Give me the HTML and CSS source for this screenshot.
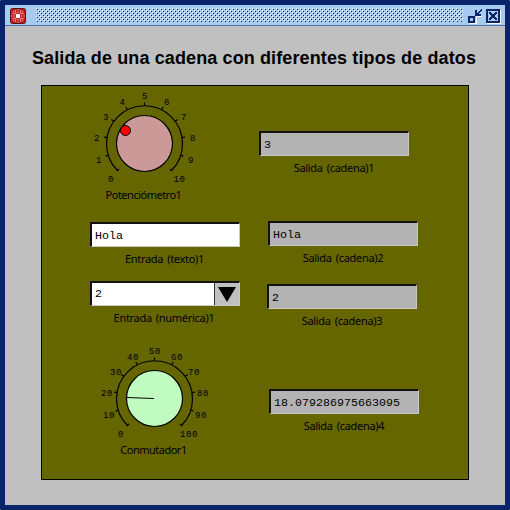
FILE: index.html
```
<!DOCTYPE html>
<html lang="es">
<head>
<meta charset="utf-8">
<title>Salida de una cadena</title>
<link rel="stylesheet" href="styles.css">
</head>
<body>
<div class="window">
  <header class="titlebar">
    <svg class="app-icon" width="16" height="16" viewBox="0 0 16 16">
      <rect x=".5" y=".5" width="15" height="15" rx="2" fill="#c41e24" stroke="#5c1010"/>
      <g stroke="#eaa09c" stroke-width="1" fill="none">
        <path d="M8 1v4M8 11v4M1 8h4M11 8h4M3 3l3 3M13 3l-3 3M3 13l3-3M13 13l-3-3" stroke-dasharray="1.5 1"/>
        <path d="M5 2l1 3M11 2l-1 3M2 5l3 1M2 11l3-1M14 5l-3 1M14 11l-3-1M5 14l1-3M11 14l-1-3" stroke-width=".9"/>
      </g>
      <rect x="6" y="6" width="4" height="4" fill="#fff"/>
    </svg>
    <svg class="grip" width="427" height="14" shape-rendering="crispEdges">
      <defs>
        <pattern id="dots" width="4" height="4" patternUnits="userSpaceOnUse">
          <path d="M0 0h1v1H0zM2 2h1v1H2z" fill="#fff"/>
          <path d="M1 1h1v1H1zM3 3h1v1H3z" fill="#0a246a"/>
        </pattern>
      </defs>
      <rect width="427" height="14" fill="url(#dots)"/>
    </svg>
    <svg class="controls" width="34" height="16" viewBox="0 0 34 16" shape-rendering="crispEdges">
      <g fill="none" stroke="#fff"><path d="M2 15.500h7.500V9M10 8.500h5M20 15.500h13.500V2"/></g>
      <rect x="2" y="9" width="5" height="5" fill="#a6caf0" stroke="#0a246a" stroke-width="2"/>
      <path d="M8 2h2v3h1V4h1V3h1V2h1V1h1v2h-1v1h-1v1h-1v1h2v2H8z" fill="#0a246a"/>
      <rect x="20" y="2" width="12" height="12" fill="#a6caf0" stroke="#0a246a" stroke-width="2"/>
      <path d="M22 4h2v1h1v1h2V5h1V4h2v2h-1v1h-1v2h1v1h1v2h-2v-1h-1v-1h-2v1h-1v1h-2v-2h1V9h1V7h-1V6h-1z" fill="#0a246a"/>
    </svg>
  </header>
  <main class="content">
    <h1>Salida de una cadena con diferentes tipos de datos</h1>
    <div class="panel">
      <section class="inputs">
        <figure class="knob potentiometer">
          <svg width="130" height="101" viewBox="0 0 130 101">
            <path class="scale" d="M37.5 85.5A38 38 0 1 1 91.5 85.5"/>
            <g class="ticks" transform="translate(64.5 58.5)">
              <path d="M0-38v-3"/><path d="M0-38v-3" transform="rotate(27)"/><path d="M0-38v-3" transform="rotate(54)"/><path d="M0-38v-3" transform="rotate(81)"/><path d="M0-38v-3" transform="rotate(108)"/><path d="M0-36v-3" transform="rotate(135)"/><path d="M0-38v-3" transform="rotate(-27)"/><path d="M0-38v-3" transform="rotate(-54)"/><path d="M0-38v-3" transform="rotate(-81)"/><path d="M0-38v-3" transform="rotate(-108)"/><path d="M0-36v-3" transform="rotate(-135)"/>
            </g>
            <circle class="dial pink" cx="64.5" cy="58.5" r="28"/>
            <circle class="marker" cx="45.5" cy="45.5" r="5"/>
            <g class="numbers">
              <text x="31" y="97">0</text><text x="19" y="78">1</text><text x="17" y="56">2</text><text x="26" y="35">3</text><text x="42.5" y="20">4</text><text x="65" y="14">5</text><text x="87" y="20">6</text><text x="104" y="35">7</text><text x="113" y="56">8</text><text x="111" y="78">9</text><text x="99.5" y="97">10</text>
            </g>
          </svg>
          <figcaption>Potenciómetro1</figcaption>
        </figure>
        <div class="control text-input">
          <div class="field editable">Hola</div>
          <div class="label">Entrada (texto)1</div>
        </div>
        <div class="control number-input">
          <div class="field editable combo">2<span class="arrow"><svg width="18" height="15" viewBox="0 0 18 15"><path d="M0 0h18L9 15z"/></svg></span></div>
          <div class="label">Entrada (numérica)1</div>
        </div>
        <figure class="knob switch">
          <svg width="150" height="101" viewBox="0 0 150 101">
            <path class="scale" d="M47.5 85.5A38 38 0 1 1 101.5 85.5"/>
            <g class="ticks" transform="translate(74.5 58.5)">
              <path d="M0-38v-3"/><path d="M0-38v-3" transform="rotate(27)"/><path d="M0-38v-3" transform="rotate(54)"/><path d="M0-38v-3" transform="rotate(81)"/><path d="M0-38v-3" transform="rotate(108)"/><path d="M0-36v-3" transform="rotate(135)"/><path d="M0-38v-3" transform="rotate(-27)"/><path d="M0-38v-3" transform="rotate(-54)"/><path d="M0-38v-3" transform="rotate(-81)"/><path d="M0-38v-3" transform="rotate(-108)"/><path d="M0-36v-3" transform="rotate(-135)"/>
            </g>
            <circle class="dial mint" cx="74.5" cy="58.5" r="28"/>
            <path class="needle" d="M74 58.5L46.5 57.5"/>
            <g class="numbers">
              <text x="41" y="97">0</text><text x="29" y="78">10</text><text x="27" y="56">20</text><text x="36" y="35">30</text><text x="53" y="20">40</text><text x="75" y="14">50</text><text x="97" y="20">60</text><text x="114" y="35">70</text><text x="123" y="56">80</text><text x="121" y="78">90</text><text x="109" y="97">100</text>
            </g>
          </svg>
          <figcaption>Conmutador1</figcaption>
        </figure>
      </section>
      <section class="outputs">
        <div class="control out-1"><div class="field">3</div><div class="label">Salida (cadena)1</div></div>
        <div class="control out-2"><div class="field">Hola</div><div class="label">Salida (cadena)2</div></div>
        <div class="control out-3"><div class="field">2</div><div class="label">Salida (cadena)3</div></div>
        <div class="control out-4"><div class="field">18.079286975663095</div><div class="label">Salida (cadena)4</div></div>
      </section>
    </div>
  </main>
</div>
</body>
</html>
```
FILE: styles.css
```
* { box-sizing: border-box; }
body { margin: 0; background: #fff; color: #000; overflow: hidden; }
.window {
  width: 510px; height: 510px;
  border: 5px solid #0a246a; border-radius: 1px;
  background: #c0c0c0;
}
.titlebar {
  display: flex; align-items: flex-start;
  height: 21px; padding: 3px 0 0 5px;
  background: #a6caf0; border-bottom: 1px solid #4a72b0;
}
.app-icon { flex: none; }
.grip { flex: none; margin-left: 10px; }
.controls { flex: none; margin-left: 4px; }
.content { height: 479px; padding: 0 36px; }
h1 {
  margin: 0 -19px 0 -21px; padding-top: 20px; height: 59px;
  font: bold 18px/24px "Liberation Sans", sans-serif;
  letter-spacing: 0.12px;
  text-align: center; white-space: nowrap;
}
.panel {
  display: flex; width: 428px; height: 395px;
  background: #666600; border: 1px solid #000;
}
.inputs { width: 216px; padding-left: 38px; flex: none; }
.outputs { padding-top: 45px; }
figure { margin: 0; }
.knob svg { display: block; }
.potentiometer { width: 130px; height: 137px; margin-top: -1px; }
.switch { width: 150px; }
.scale, .ticks, .needle { fill: none; stroke: #000; stroke-width: 1.2; }
.dial { stroke: #000; stroke-width: 1.2; }
.pink { fill: #cc9999; }
.mint { fill: #c0fcc0; }
.marker { fill: #f00; stroke: #000; }
.numbers {
  font: 9px "Liberation Mono", monospace;
  letter-spacing: 0.6px; text-anchor: middle;
}
.label, figcaption {
  font: 11px/14px "Noto Sans", sans-serif;
  letter-spacing: -0.3px; word-spacing: 1.5px;
  text-align: center; white-space: nowrap;
}
.knob figcaption { margin-top: 2px; letter-spacing: -0.5px; }
.potentiometer figcaption { width: 127px; }
.switch figcaption { width: 147px; }
.control { width: 150px; }
.field {
  height: 25px; padding: 2px 0 0 3px; margin-bottom: 5px;
  background: #b3b3b3;
  border: 2px solid; border-color: #111 #c8c8c8 #c8c8c8 #111;
  border-right-width: 1px; border-bottom-width: 1px;
  font: 11.67px/21px "Liberation Mono", monospace; white-space: nowrap;
}
.editable { background: #fff; }
.text-input { margin-left: 10px; height: 59px; }
.text-input .label { padding-right: 1px; }
.number-input { margin-left: 10px; height: 59px; }
.number-input .label { padding-right: 2px; }
.combo { display: flex; justify-content: space-between; padding-top: 0; line-height: 23px; }
.arrow {
  display: flex; align-items: center; justify-content: center;
  width: 25px; background: #c0c0c0; border-left: 1px solid #333;
}
.out-1 { margin-left: 1px; height: 90px; }
.out-2 { margin-left: 10px; height: 63px; }
.out-3 { margin-left: 9px; height: 105px; }
.out-4 { margin-left: 11px; }
```
